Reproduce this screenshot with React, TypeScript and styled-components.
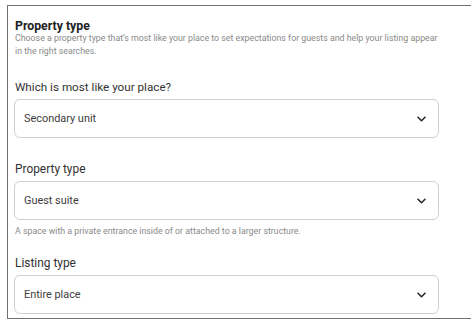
import React from "react";
import styled, { createGlobalStyle } from "styled-components";

const GlobalStyle = createGlobalStyle`
  body {
    margin: 0;
    background: #fff;
    font-family: Roboto, "Noto Sans", sans-serif;
  }
`;

const Page = styled.div`
  padding: 5px 0 0 7px;
`;

const Frame = styled.div`
  width: 457px;
  height: 312px;
  border: 1px solid #707070;
  border-right: 2px solid #6a6a6a;
  box-sizing: content-box;
  overflow: hidden;
  padding: 0 0 0 6px;
`;

const Title = styled.h2`
  margin: 13px 0 0 1px;
  font-size: 12.3px;
  font-weight: 700;
  color: #222;
  line-height: 14px;
`;

const Hint = styled.p<{ $top: number }>`
  margin: ${(p) => p.$top}px 0 0 1px;
  font-size: 8.8px;
  line-height: 13px;
  color: #8a8a8a;
  max-width: 424px;
`;

const Label = styled.div<{ $top: number; $size: number }>`
  margin: ${(p) => p.$top}px 0 0 1px;
  font-size: ${(p) => p.$size}px;
  line-height: 14px;
  color: #333;
`;

const Select = styled.div`
  margin-top: 5px;
  width: 425px;
  height: 39px;
  box-sizing: border-box;
  border: 1px solid #cfcfcf;
  border-radius: 6px;
  display: flex;
  align-items: center;
  justify-content: space-between;
  padding: 0 12px 0 9px;
  font-size: 10.9px;
  color: #3d3d3d;
`;

const Chevron = () => (
  <svg width="9" height="6" viewBox="0 0 9 6" fill="none">
    <path d="M1 1.2l3.5 3.5 3.5-3.5" stroke="#222" strokeWidth="1.5" strokeLinecap="round" strokeLinejoin="round" />
  </svg>
);

const fields = [
  { label: "Which is most like your place?", value: "Secondary unit", top: 22, size: 11.7 },
  { label: "Property type", value: "Guest suite", top: 24, size: 11.9 },
  { label: "Listing type", value: "Entire place", top: 18, size: 11.9 },
];

export default function App() {
  return (
    <>
      <GlobalStyle />
      <Page>
        <Frame>
          <Title>Property type</Title>
          <Hint $top={-1}>
            Choose a property type that’s most like your place to set expectations for guests and help your listing appear
            in the right searches.
          </Hint>
          {fields.map((f, i) => (
            <React.Fragment key={f.label}>
              <Label $top={f.top} $size={f.size}>
                {f.label}
              </Label>
              <Select>
                <span>{f.value}</span>
                <Chevron />
              </Select>
              {i === 1 && <Hint $top={5}>A space with a private entrance inside of or attached to a larger structure.</Hint>}
            </React.Fragment>
          ))}
        </Frame>
      </Page>
    </>
  );
}
